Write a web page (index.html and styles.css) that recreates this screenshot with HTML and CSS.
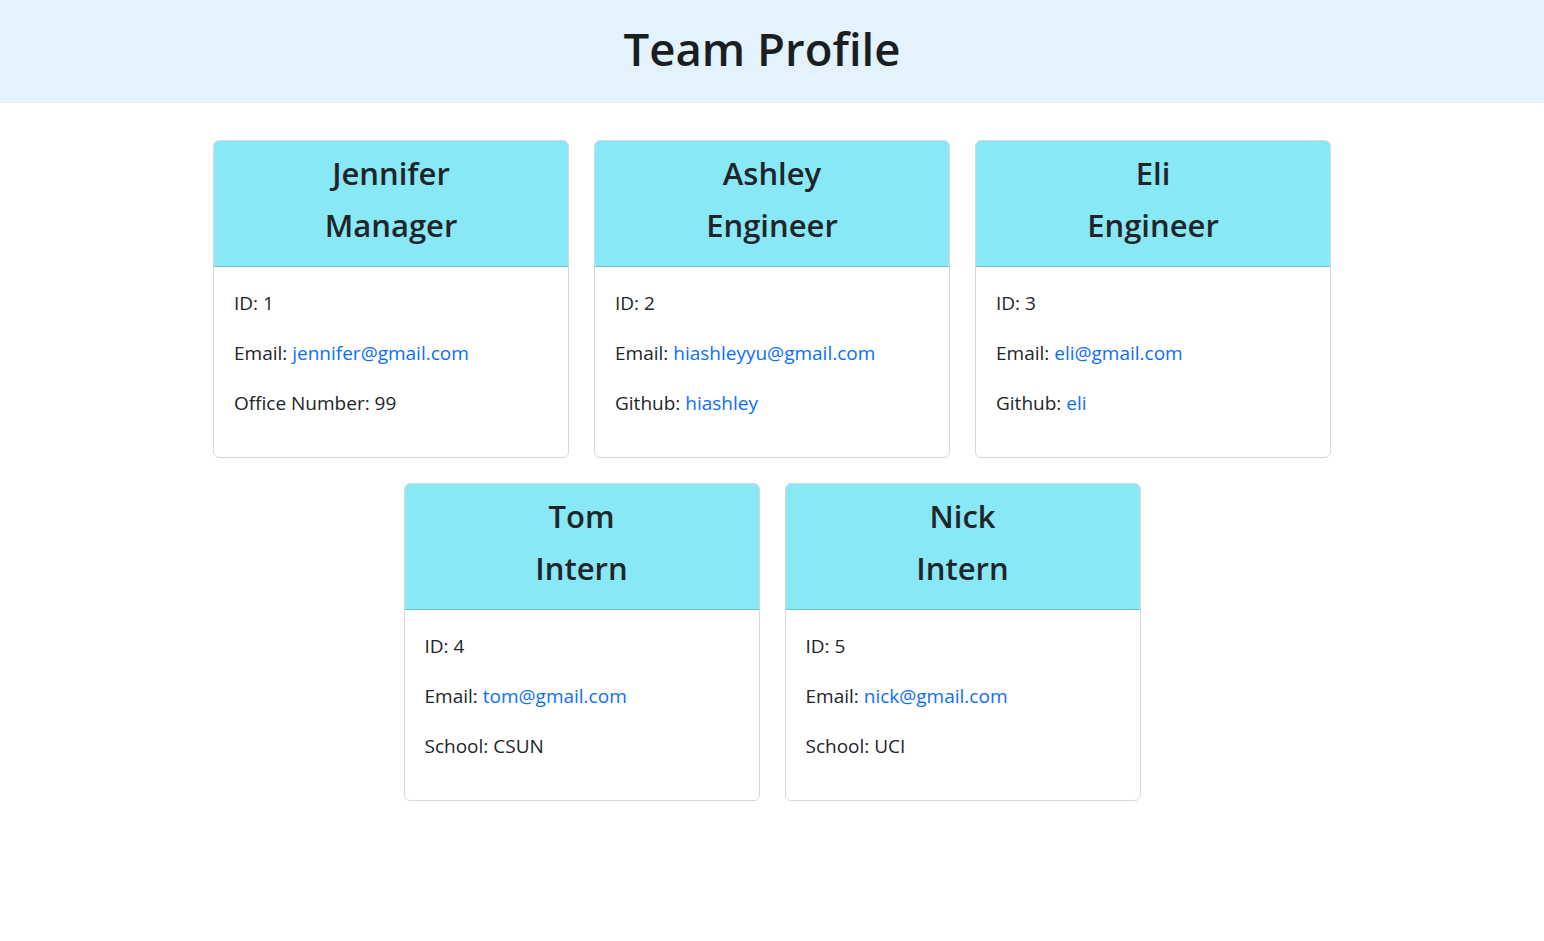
FILE: index.html
```html
<!DOCTYPE html>
<html lang="en">
<head>
<meta charset="utf-8">
<title>Team Profile</title>
<link rel="stylesheet" href="styles.css">
</head>
<body>
<header class="banner">
  <h1 class="banner-title">Team Profile</h1>
</header>
<main class="team">
  <article class="card">
    <div class="card-head"><h2 class="card-name">Jennifer</h2><h2 class="card-role">Manager</h2></div>
    <div class="card-body">
      <p>ID: 1</p>
      <p>Email: <a href="#">jennifer@gmail.com</a></p>
      <p>Office Number: 99</p>
    </div>
  </article>
  <article class="card">
    <div class="card-head"><h2 class="card-name">Ashley</h2><h2 class="card-role">Engineer</h2></div>
    <div class="card-body">
      <p>ID: 2</p>
      <p>Email: <a href="#">hiashleyyu@gmail.com</a></p>
      <p>Github: <a href="#">hiashley</a></p>
    </div>
  </article>
  <article class="card">
    <div class="card-head"><h2 class="card-name">Eli</h2><h2 class="card-role">Engineer</h2></div>
    <div class="card-body">
      <p>ID: 3</p>
      <p>Email: <a href="#">eli@gmail.com</a></p>
      <p>Github: <a href="#">eli</a></p>
    </div>
  </article>
  <article class="card">
    <div class="card-head"><h2 class="card-name">Tom</h2><h2 class="card-role">Intern</h2></div>
    <div class="card-body">
      <p>ID: 4</p>
      <p>Email: <a href="#">tom@gmail.com</a></p>
      <p>School: CSUN</p>
    </div>
  </article>
  <article class="card">
    <div class="card-head"><h2 class="card-name">Nick</h2><h2 class="card-role">Intern</h2></div>
    <div class="card-body">
      <p>ID: 5</p>
      <p>Email: <a href="#">nick@gmail.com</a></p>
      <p>School: UCI</p>
    </div>
  </article>
</main>
</body>
</html>
```
FILE: styles.css
```css
* { box-sizing: border-box; }
html, body { margin: 0; padding: 0; }
body {
  font-family: "Open Sans", "Noto Sans", sans-serif;
  color: #212529;
  background: #fff;
}
.banner {
  height: 103px;
  background: #e3f2fd;
  display: flex;
  align-items: center;
  justify-content: center;
  padding-right: 20px;
}
.banner-title {
  margin: 0;
  font-size: 45.5px;
  font-weight: 600;
  line-height: 1;
  color: #1b1e21;
  padding-bottom: 6px;
}
.team {
  width: 1118px;
  margin: 37px auto 0;
  display: flex;
  flex-wrap: wrap;
  justify-content: center;
  gap: 25px 25px;
}
.card {
  width: 356px;
  border: 1px solid #d6d8da;
  border-radius: 6px;
  overflow: hidden;
  background: #fff;
}
.card-head {
  height: 126px;
  background: #88e8f6;
  border-bottom: 1px solid #6fc3d0;
  text-align: center;
  padding-top: 6px;
}
.card-head h2 {
  margin: 0;
  font-size: 31px;
  font-weight: 600;
  line-height: 52px;
  color: #212529;
}
.card-body {
  height: 190px;
  padding: 11px 20px 0;
}
.card-body p {
  margin: 0;
  font-size: 19px;
  line-height: 50px;
}
.card-body a {
  color: #0d6efd;
  text-decoration: none;
}
```
